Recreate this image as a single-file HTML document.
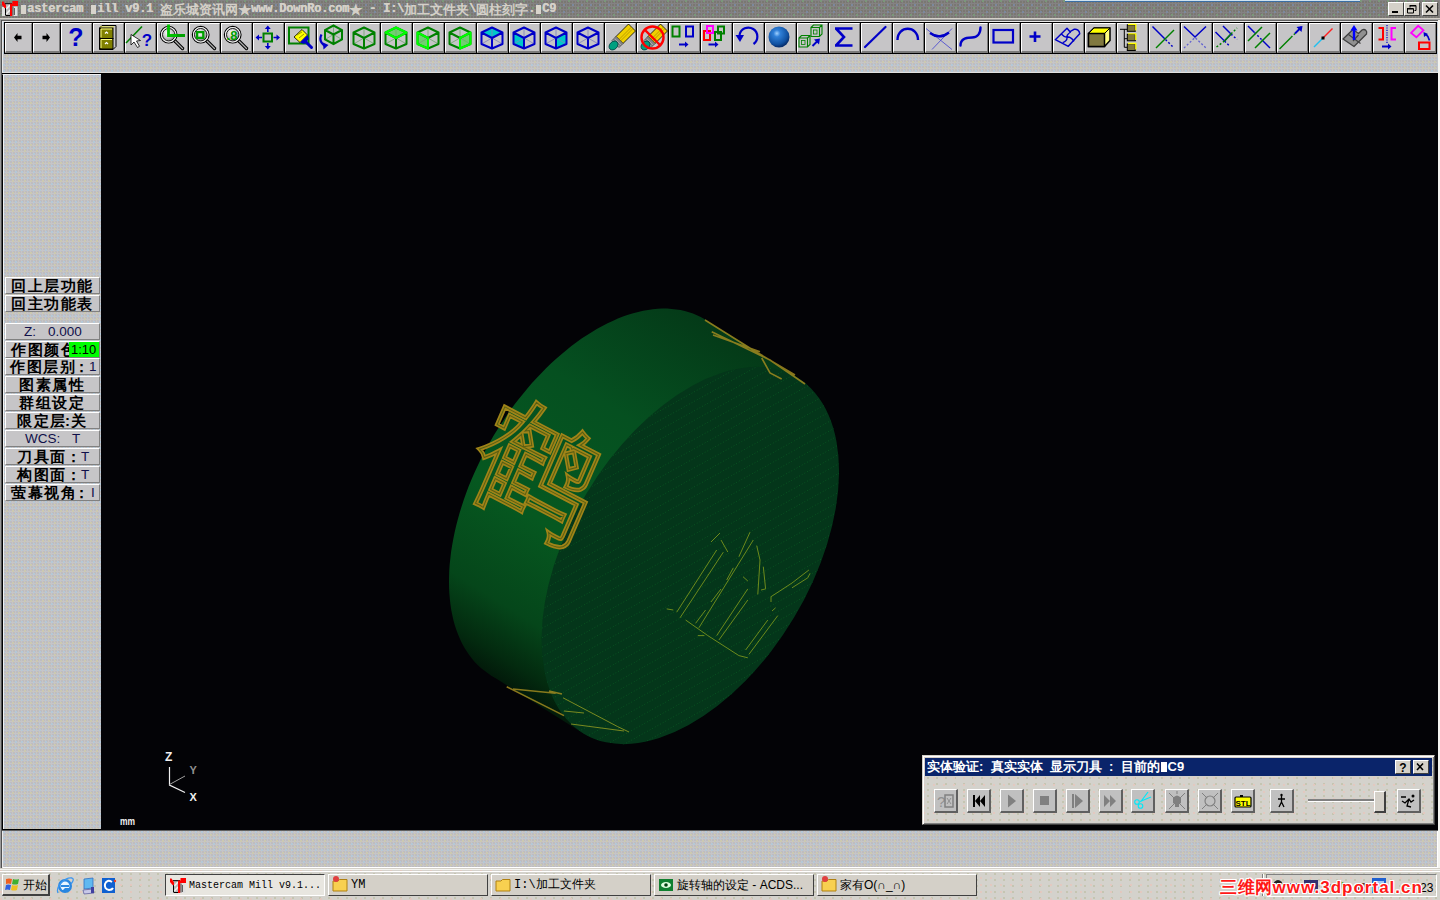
<!DOCTYPE html><html><head><meta charset="utf-8"><style>
*{margin:0;padding:0;box-sizing:border-box}
html,body{width:1440px;height:900px;overflow:hidden;background:#c6c5c7;font-family:"Liberation Sans",sans-serif;position:relative}
.a{position:absolute}
.tx{background-color:#c6c5c7;background-image:radial-gradient(circle at 1px 1px,#b4c8d8 0.8px,transparent 0.9px),radial-gradient(circle at 1px 1px,#ccc9b0 0.8px,transparent 0.9px),radial-gradient(circle at 1px 1px,#bebdbf 0.8px,transparent 0.9px);background-size:6px 6px,6px 6px,3px 3px;background-position:0 0,3px 3px,1px 2px}
.tt{background-color:#d4d2cc;background-image:radial-gradient(circle at 1px 1px,#e4c8c0 0.7px,transparent 0.8px),radial-gradient(circle at 1px 1px,#c4c4b0 0.7px,transparent 0.8px);background-size:10px 7px,9px 6px;background-position:0 0,4px 3px}
.tg{background-color:#848283;background-image:radial-gradient(circle at 1px 1px,#7a9a7a 0.7px,transparent 0.8px),radial-gradient(circle at 1px 1px,#7c8aa0 0.7px,transparent 0.8px),radial-gradient(circle at 1px 1px,#7a7872 0.8px,transparent 0.9px);background-size:9px 7px,9px 7px,3px 3px;background-position:1px 0,5px 4px,0 1px}
.btn{position:absolute;top:23px;height:30px;background:#c6c5c7;border-top:1px solid #fff;border-left:1px solid #fff;border-right:1px solid #7b7b7b;border-bottom:2px solid #7b7b7b}
.btn svg{position:absolute;left:0;top:0}
.lb{position:absolute;left:5px;width:95px;height:17px;background:#c6c5c7;border-top:1px solid #fff;border-left:1px solid #fff;border-right:1px solid #808080;border-bottom:1px solid #808080;font-weight:bold;font-size:15px;color:#000;line-height:16px;white-space:nowrap;overflow:hidden;letter-spacing:1.5px}
.db{position:absolute;top:789px;width:24px;height:24px;background:#c0c0c0;border-top:1px solid #fff;border-left:1px solid #fff;border-right:2px solid #606060;border-bottom:2px solid #606060}
.db svg{position:absolute;left:0;top:0}
.tb{position:absolute;top:874px;height:22px;background:#d4d0c8;border-top:1px solid #fff;border-left:1px solid #fff;border-right:1px solid #404040;border-bottom:1px solid #404040;font-size:12px;line-height:19px;white-space:nowrap;overflow:hidden;color:#000}
</style></head><body>

<div class="a tg" style="left:0;top:0;width:1440px;height:18px"></div>
<div class="a" style="left:1065px;top:0;width:295px;height:2px;background:#cfe3f0;border-bottom:1px solid #3a6ea5"></div>
<svg class="a" style="left:0px;top:0px" width="20" height="18" viewBox="0 0 20 18"><rect x="2" y="7" width="3.5" height="9" fill="#e0e0e0"/><path d="M2 1.5 L3.5 1.5 L6.5 6 L6.5 8.5 L5 8.5 L2 5Z" fill="#ff0000"/><rect x="5" y="8" width="1.2" height="7.5" fill="#000"/><rect x="6" y="4" width="4.5" height="11.5" fill="#b8b8b8"/><path d="M6.3 9 L10 5 M6.3 14 L10 10" stroke="#f0f0f0" stroke-width="1.6"/><rect x="5" y="3" width="7" height="1.2" fill="#202020"/><rect x="6" y="15" width="4.5" height="1" fill="#000"/><path d="M10 3.5 L12.5 3.5 L12.5 1 L18 1 L18 6 L12.5 6 L12.5 16 L10 16Z" fill="#ff0000"/><rect x="12.5" y="6.5" width="5" height="9.5" fill="#e0e0e0"/><rect x="14" y="8" width="1" height="7" fill="#606060"/><rect x="12.5" y="6.5" width="1" height="9" fill="#404040"/></svg>
<div class="a" style="left:21px;top:5px;width:5px;height:9px;background:#d8d4cc"></div><div class="a" style="left:27px;top:1px;width:7px;font-family:'Liberation Mono', monospace;font-size:12px;font-weight:bold;line-height:17px;color:#d4d0c8;text-shadow:0.5px 0 #d4d0c8">a</div><div class="a" style="left:34px;top:1px;width:7px;font-family:'Liberation Mono', monospace;font-size:12px;font-weight:bold;line-height:17px;color:#d4d0c8;text-shadow:0.5px 0 #d4d0c8">s</div><div class="a" style="left:41px;top:1px;width:7px;font-family:'Liberation Mono', monospace;font-size:12px;font-weight:bold;line-height:17px;color:#d4d0c8;text-shadow:0.5px 0 #d4d0c8">t</div><div class="a" style="left:48px;top:1px;width:7px;font-family:'Liberation Mono', monospace;font-size:12px;font-weight:bold;line-height:17px;color:#d4d0c8;text-shadow:0.5px 0 #d4d0c8">e</div><div class="a" style="left:55px;top:1px;width:7px;font-family:'Liberation Mono', monospace;font-size:12px;font-weight:bold;line-height:17px;color:#d4d0c8;text-shadow:0.5px 0 #d4d0c8">r</div><div class="a" style="left:62px;top:1px;width:7px;font-family:'Liberation Mono', monospace;font-size:12px;font-weight:bold;line-height:17px;color:#d4d0c8;text-shadow:0.5px 0 #d4d0c8">c</div><div class="a" style="left:69px;top:1px;width:7px;font-family:'Liberation Mono', monospace;font-size:12px;font-weight:bold;line-height:17px;color:#d4d0c8;text-shadow:0.5px 0 #d4d0c8">a</div><div class="a" style="left:76px;top:1px;width:7px;font-family:'Liberation Mono', monospace;font-size:12px;font-weight:bold;line-height:17px;color:#d4d0c8;text-shadow:0.5px 0 #d4d0c8">m</div><div class="a" style="left:91px;top:5px;width:5px;height:9px;background:#d8d4cc"></div><div class="a" style="left:97px;top:1px;width:7px;font-family:'Liberation Mono', monospace;font-size:12px;font-weight:bold;line-height:17px;color:#d4d0c8;text-shadow:0.5px 0 #d4d0c8">i</div><div class="a" style="left:104px;top:1px;width:7px;font-family:'Liberation Mono', monospace;font-size:12px;font-weight:bold;line-height:17px;color:#d4d0c8;text-shadow:0.5px 0 #d4d0c8">l</div><div class="a" style="left:111px;top:1px;width:7px;font-family:'Liberation Mono', monospace;font-size:12px;font-weight:bold;line-height:17px;color:#d4d0c8;text-shadow:0.5px 0 #d4d0c8">l</div><div class="a" style="left:125px;top:1px;width:7px;font-family:'Liberation Mono', monospace;font-size:12px;font-weight:bold;line-height:17px;color:#d4d0c8;text-shadow:0.5px 0 #d4d0c8">v</div><div class="a" style="left:132px;top:1px;width:7px;font-family:'Liberation Mono', monospace;font-size:12px;font-weight:bold;line-height:17px;color:#d4d0c8;text-shadow:0.5px 0 #d4d0c8">9</div><div class="a" style="left:139px;top:1px;width:7px;font-family:'Liberation Mono', monospace;font-size:12px;font-weight:bold;line-height:17px;color:#d4d0c8;text-shadow:0.5px 0 #d4d0c8">.</div><div class="a" style="left:146px;top:1px;width:7px;font-family:'Liberation Mono', monospace;font-size:12px;font-weight:bold;line-height:17px;color:#d4d0c8;text-shadow:0.5px 0 #d4d0c8">1</div><div class="a" style="left:160px;top:1px;width:13px;text-align:center;font-size:13px;line-height:17px;color:#d4d0c8;font-weight:bold">盗</div><div class="a" style="left:173px;top:1px;width:13px;text-align:center;font-size:13px;line-height:17px;color:#d4d0c8;font-weight:bold">乐</div><div class="a" style="left:186px;top:1px;width:13px;text-align:center;font-size:13px;line-height:17px;color:#d4d0c8;font-weight:bold">城</div><div class="a" style="left:199px;top:1px;width:13px;text-align:center;font-size:13px;line-height:17px;color:#d4d0c8;font-weight:bold">资</div><div class="a" style="left:212px;top:1px;width:13px;text-align:center;font-size:13px;line-height:17px;color:#d4d0c8;font-weight:bold">讯</div><div class="a" style="left:225px;top:1px;width:13px;text-align:center;font-size:13px;line-height:17px;color:#d4d0c8;font-weight:bold">网</div><div class="a" style="left:238px;top:1px;width:13px;text-align:center;font-size:15px;line-height:17px;color:#d4d0c8;font-weight:bold">★</div><div class="a" style="left:251px;top:1px;width:7px;font-family:'Liberation Mono', monospace;font-size:12px;font-weight:bold;line-height:17px;color:#d4d0c8;text-shadow:0.5px 0 #d4d0c8">w</div><div class="a" style="left:258px;top:1px;width:7px;font-family:'Liberation Mono', monospace;font-size:12px;font-weight:bold;line-height:17px;color:#d4d0c8;text-shadow:0.5px 0 #d4d0c8">w</div><div class="a" style="left:265px;top:1px;width:7px;font-family:'Liberation Mono', monospace;font-size:12px;font-weight:bold;line-height:17px;color:#d4d0c8;text-shadow:0.5px 0 #d4d0c8">w</div><div class="a" style="left:272px;top:1px;width:7px;font-family:'Liberation Mono', monospace;font-size:12px;font-weight:bold;line-height:17px;color:#d4d0c8;text-shadow:0.5px 0 #d4d0c8">.</div><div class="a" style="left:279px;top:1px;width:7px;font-family:'Liberation Mono', monospace;font-size:12px;font-weight:bold;line-height:17px;color:#d4d0c8;text-shadow:0.5px 0 #d4d0c8">D</div><div class="a" style="left:286px;top:1px;width:7px;font-family:'Liberation Mono', monospace;font-size:12px;font-weight:bold;line-height:17px;color:#d4d0c8;text-shadow:0.5px 0 #d4d0c8">o</div><div class="a" style="left:293px;top:1px;width:7px;font-family:'Liberation Mono', monospace;font-size:12px;font-weight:bold;line-height:17px;color:#d4d0c8;text-shadow:0.5px 0 #d4d0c8">w</div><div class="a" style="left:300px;top:1px;width:7px;font-family:'Liberation Mono', monospace;font-size:12px;font-weight:bold;line-height:17px;color:#d4d0c8;text-shadow:0.5px 0 #d4d0c8">n</div><div class="a" style="left:307px;top:1px;width:7px;font-family:'Liberation Mono', monospace;font-size:12px;font-weight:bold;line-height:17px;color:#d4d0c8;text-shadow:0.5px 0 #d4d0c8">R</div><div class="a" style="left:314px;top:1px;width:7px;font-family:'Liberation Mono', monospace;font-size:12px;font-weight:bold;line-height:17px;color:#d4d0c8;text-shadow:0.5px 0 #d4d0c8">o</div><div class="a" style="left:321px;top:1px;width:7px;font-family:'Liberation Mono', monospace;font-size:12px;font-weight:bold;line-height:17px;color:#d4d0c8;text-shadow:0.5px 0 #d4d0c8">.</div><div class="a" style="left:328px;top:1px;width:7px;font-family:'Liberation Mono', monospace;font-size:12px;font-weight:bold;line-height:17px;color:#d4d0c8;text-shadow:0.5px 0 #d4d0c8">c</div><div class="a" style="left:335px;top:1px;width:7px;font-family:'Liberation Mono', monospace;font-size:12px;font-weight:bold;line-height:17px;color:#d4d0c8;text-shadow:0.5px 0 #d4d0c8">o</div><div class="a" style="left:342px;top:1px;width:7px;font-family:'Liberation Mono', monospace;font-size:12px;font-weight:bold;line-height:17px;color:#d4d0c8;text-shadow:0.5px 0 #d4d0c8">m</div><div class="a" style="left:349px;top:1px;width:13px;text-align:center;font-size:15px;line-height:17px;color:#d4d0c8;font-weight:bold">★</div><div class="a" style="left:369px;top:1px;width:7px;font-family:'Liberation Mono', monospace;font-size:12px;font-weight:bold;line-height:17px;color:#d4d0c8;text-shadow:0.5px 0 #d4d0c8">-</div><div class="a" style="left:383px;top:1px;width:7px;font-family:'Liberation Mono', monospace;font-size:12px;font-weight:bold;line-height:17px;color:#d4d0c8;text-shadow:0.5px 0 #d4d0c8">I</div><div class="a" style="left:390px;top:1px;width:7px;font-family:'Liberation Mono', monospace;font-size:12px;font-weight:bold;line-height:17px;color:#d4d0c8;text-shadow:0.5px 0 #d4d0c8">:</div><div class="a" style="left:397px;top:1px;width:7px;font-family:'Liberation Mono', monospace;font-size:12px;font-weight:bold;line-height:17px;color:#d4d0c8;text-shadow:0.5px 0 #d4d0c8">\</div><div class="a" style="left:404px;top:1px;width:13px;text-align:center;font-size:13px;line-height:17px;color:#d4d0c8;font-weight:bold">加</div><div class="a" style="left:417px;top:1px;width:13px;text-align:center;font-size:13px;line-height:17px;color:#d4d0c8;font-weight:bold">工</div><div class="a" style="left:430px;top:1px;width:13px;text-align:center;font-size:13px;line-height:17px;color:#d4d0c8;font-weight:bold">文</div><div class="a" style="left:443px;top:1px;width:13px;text-align:center;font-size:13px;line-height:17px;color:#d4d0c8;font-weight:bold">件</div><div class="a" style="left:456px;top:1px;width:13px;text-align:center;font-size:13px;line-height:17px;color:#d4d0c8;font-weight:bold">夹</div><div class="a" style="left:469px;top:1px;width:7px;font-family:'Liberation Mono', monospace;font-size:12px;font-weight:bold;line-height:17px;color:#d4d0c8;text-shadow:0.5px 0 #d4d0c8">\</div><div class="a" style="left:476px;top:1px;width:13px;text-align:center;font-size:13px;line-height:17px;color:#d4d0c8;font-weight:bold">圆</div><div class="a" style="left:489px;top:1px;width:13px;text-align:center;font-size:13px;line-height:17px;color:#d4d0c8;font-weight:bold">柱</div><div class="a" style="left:502px;top:1px;width:13px;text-align:center;font-size:13px;line-height:17px;color:#d4d0c8;font-weight:bold">刻</div><div class="a" style="left:515px;top:1px;width:13px;text-align:center;font-size:13px;line-height:17px;color:#d4d0c8;font-weight:bold">字</div><div class="a" style="left:528px;top:1px;width:7px;font-family:'Liberation Mono', monospace;font-size:12px;font-weight:bold;line-height:17px;color:#d4d0c8;text-shadow:0.5px 0 #d4d0c8">.</div><div class="a" style="left:536px;top:5px;width:5px;height:9px;background:#d8d4cc"></div><div class="a" style="left:542px;top:1px;width:7px;font-family:'Liberation Mono', monospace;font-size:12px;font-weight:bold;line-height:17px;color:#d4d0c8;text-shadow:0.5px 0 #d4d0c8">C</div><div class="a" style="left:549px;top:1px;width:7px;font-family:'Liberation Mono', monospace;font-size:12px;font-weight:bold;line-height:17px;color:#d4d0c8;text-shadow:0.5px 0 #d4d0c8">9</div>
<div class="a" style="left:1388px;top:2px;width:16px;height:14px;background:#d4d0c8;border-top:1px solid #fff;border-left:1px solid #fff;border-right:1px solid #404040;border-bottom:1px solid #404040"></div>
<div class="a" style="left:1404px;top:2px;width:16px;height:14px;background:#d4d0c8;border-top:1px solid #fff;border-left:1px solid #fff;border-right:1px solid #404040;border-bottom:1px solid #404040"></div>
<div class="a" style="left:1422px;top:2px;width:16px;height:14px;background:#d4d0c8;border-top:1px solid #fff;border-left:1px solid #fff;border-right:1px solid #404040;border-bottom:1px solid #404040"></div>
<div class="a" style="left:1392px;top:11px;width:6px;height:2px;background:#000"></div>
<svg class="a" style="left:1404px;top:2px" width="16" height="14"><path d="M6 3.5h6v5h-1.5 M6 3v2.5 M3.5 6.5h6v4.5h-6z" fill="none" stroke="#000" stroke-width="1"/><rect x="6" y="3" width="6" height="1.5" fill="#000"/><rect x="3" y="6" width="6" height="1.5" fill="#000"/></svg>
<svg class="a" style="left:1422px;top:2px" width="16" height="14"><path d="M4 3.5 L11 10.5 M11 3.5 L4 10.5" stroke="#000" stroke-width="1.6"/></svg>
<div class="a" style="left:0;top:18px;width:1440px;height:1px;background:#d4d0c8"></div>
<div class="a" style="left:0;top:19px;width:1440px;height:1px;background:#a0a0a0"></div>
<div class="a" style="left:1px;top:20px;width:1438px;height:1px;background:#606060"></div>
<div class="a" style="left:2px;top:21px;width:1436px;height:1px;background:#e8e8e8"></div>
<div class="a" style="left:0;top:20px;width:1px;height:880px;background:#9a9a9a"></div>
<div class="a" style="left:1px;top:20px;width:1px;height:849px;background:#505050"></div>
<div class="a" style="left:2px;top:21px;width:1px;height:848px;background:#e8e8e8"></div>
<div class="a" style="left:1438px;top:20px;width:2px;height:849px;background:#f4f4f0"></div>
<div class="a tx" style="left:3px;top:22px;width:1435px;height:50px"></div>
<div class="a" style="left:4px;top:22px;width:1433px;height:32px;background:#000"></div>
<svg width="0" height="0" style="position:absolute"><defs>
<radialGradient id="gl" cx="40%" cy="35%" r="65%"><stop offset="0" stop-color="#ffffff"/><stop offset=".6" stop-color="#c8c8c8"/><stop offset="1" stop-color="#909090"/></radialGradient>
<radialGradient id="sph" cx="40%" cy="33%" r="65%"><stop offset="0" stop-color="#a0d0ff"/><stop offset=".25" stop-color="#3080d8"/><stop offset=".8" stop-color="#1050a0"/><stop offset="1" stop-color="#083070"/></radialGradient>
</defs></svg>
<div class="btn" style="left:5px;width:27px"><svg style="left:-1px;top:-1px" width="27" height="29" viewBox="0 0 27 29"><path d="M9 14.5 L12.5 10 L12.5 12.8 L16.5 12.8 L16.5 16.2 L12.5 16.2 L12.5 19Z" fill="#000"/></svg></div>
<div class="btn" style="left:33px;width:27px"><svg style="left:-1px;top:-1px" width="27" height="29" viewBox="0 0 27 29"><path d="M17 14.5 L13.5 10 L13.5 12.8 L9.5 12.8 L9.5 16.2 L13.5 16.2 L13.5 19Z" fill="#000"/></svg></div>
<div class="btn" style="left:61px;width:31px"><svg style="left:-1px;top:-1px" width="31" height="29" viewBox="0 0 31 29"><text x="15" y="23" font-family="Liberation Sans" font-weight="bold" font-size="25" fill="#0000c8" text-anchor="middle">?</text></svg></div>
<div class="btn" style="left:93px;width:31px"><svg style="left:-1px;top:-1px" width="31" height="29" viewBox="0 0 31 29"><path d="M6.5 5 L9 2.5 L23 2.5 L23 23.5 L20 26.5 L6.5 26.5Z" fill="#c8c8c8" stroke="#000" stroke-width="1"/><path d="M7.5 4 L21.5 4" stroke="#ffff00" stroke-width="1.4" stroke-dasharray="1 1"/><rect x="7" y="5" width="13" height="10.5" fill="#808000" stroke="#000" stroke-width="1"/><rect x="7" y="15.5" width="13" height="10.5" fill="#808000" stroke="#000" stroke-width="1"/><path d="M8 14.5 L8 6 L19 6 M8 25 L8 16.5 L19 16.5" stroke="#ffff80" stroke-width="1" fill="none"/><path d="M12 10.5 L13.5 9 L15 10.5 M12 21 L13.5 19.5 L15 21" stroke="#fff" stroke-width="1.2" fill="none"/></svg></div>
<div class="btn" style="left:125px;width:31px"><svg style="left:-1px;top:-1px" width="31" height="29" viewBox="0 0 31 29"><path d="M1 20 L17 3.5" stroke="#008000" stroke-width="1.6"/><path d="M6 11.5 L6 22 L9 19 L12.5 24.5 L14.5 23.3 L11.5 18 L15.5 17.5Z" fill="#fff" stroke="#000" stroke-width=".8"/><text x="22" y="22.5" font-family="Liberation Sans" font-weight="bold" font-size="17" fill="#0000c8" text-anchor="middle">?</text></svg></div>
<div class="btn" style="left:157px;width:31px"><svg style="left:-1px;top:-1px" width="31" height="29" viewBox="0 0 31 29"><path d="M18 18 L25.5 25.5" stroke="#000" stroke-width="3.4" stroke-linecap="round"/><path d="M18 18 L25.5 25.5" stroke="#b0b0b0" stroke-width="1.3" stroke-linecap="round"/><circle cx="11.7" cy="11.7" r="8.3" fill="none" stroke="#000" stroke-width="1.2"/><circle cx="11.7" cy="11.7" r="7.2" fill="none" stroke="#f0f0f0" stroke-width="1.1"/><circle cx="11.7" cy="11.7" r="6.2" fill="url(#gl)" stroke="#202020" stroke-width="1"/><path d="M11.5 1.5 L11.5 12.5 L28 12.5" stroke="#00c000" stroke-width="2.8" fill="none"/><path d="M20 12.5 L28 12.5" stroke="#00a000" stroke-width="2.8"/></svg></div>
<div class="btn" style="left:189px;width:31px"><svg style="left:-1px;top:-1px" width="31" height="29" viewBox="0 0 31 29"><path d="M18 18 L25.5 25.5" stroke="#000" stroke-width="3.4" stroke-linecap="round"/><path d="M18 18 L25.5 25.5" stroke="#b0b0b0" stroke-width="1.3" stroke-linecap="round"/><circle cx="11.7" cy="11.7" r="8.3" fill="none" stroke="#000" stroke-width="1.2"/><circle cx="11.7" cy="11.7" r="7.2" fill="none" stroke="#f0f0f0" stroke-width="1.1"/><circle cx="11.7" cy="11.7" r="6.2" fill="url(#gl)" stroke="#202020" stroke-width="1"/><rect x="8.1" y="9.1" width="6.2" height="5.8" fill="none" stroke="#00a000" stroke-width="2.3"/></svg></div>
<div class="btn" style="left:221px;width:31px"><svg style="left:-1px;top:-1px" width="31" height="29" viewBox="0 0 31 29"><path d="M18 18 L25.5 25.5" stroke="#000" stroke-width="3.4" stroke-linecap="round"/><path d="M18 18 L25.5 25.5" stroke="#b0b0b0" stroke-width="1.3" stroke-linecap="round"/><circle cx="11.7" cy="11.7" r="8.3" fill="none" stroke="#000" stroke-width="1.2"/><circle cx="11.7" cy="11.7" r="7.2" fill="none" stroke="#f0f0f0" stroke-width="1.1"/><circle cx="11.7" cy="11.7" r="6.2" fill="url(#gl)" stroke="#202020" stroke-width="1"/><text x="11" y="17" font-family="Liberation Sans" font-weight="bold" font-size="13" fill="#00a000" text-anchor="middle">.8</text></svg></div>
<div class="btn" style="left:253px;width:31px"><svg style="left:-1px;top:-1px" width="31" height="29" viewBox="0 0 31 29"><rect x="10.5" y="10.5" width="8.5" height="8" fill="none" stroke="#008000" stroke-width="2"/><path d="M14.8 9 V5 M14.8 20 V24 M9 14.5 H5 M20.5 14.5 H24.5" stroke="#0000c8" stroke-width="1.6"/><path d="M14.8 2.5 L11.8 6 H17.8Z M14.8 26.5 L11.8 23 H17.8Z M2.5 14.5 L6 11.5 V17.5Z M27 14.5 L23.5 11.5 V17.5Z" fill="#0000c8"/></svg></div>
<div class="btn" style="left:285px;width:31px"><svg style="left:-1px;top:-1px" width="31" height="29" viewBox="0 0 31 29"><rect x="4" y="4.5" width="19.5" height="16" fill="none" stroke="#008000" stroke-width="2"/><path d="M9 14 L17 6.5 L22.5 12 L15 19.5Z" fill="#ffff00" stroke="#000" stroke-width=".8"/><path d="M12 12 L17 9 M14 15 L19 11" stroke="#808000" stroke-width=".8"/><path d="M15 19.5 L22.5 12 L24 16 L19 21Z" fill="#0000c8"/><path d="M21 19 L26.5 24.5" stroke="#0000c8" stroke-width="3" stroke-linecap="round"/></svg></div>
<div class="btn" style="left:317px;width:31px"><svg style="left:-1px;top:-1px" width="31" height="29" viewBox="0 0 31 29"><path d="M16.5 2.5 V11.5 M8 16.5 L16.5 11.5 L25 16.5" fill="none" stroke="#80b080" stroke-width="1"/><path d="M16.5 2.5 L25 7 L25 16.5 L16.5 21 L8 16.5 L8 7Z M8 7 L16.5 11.5 L25 7 M16.5 11.5 L16.5 21" fill="none" stroke="#008000" stroke-width="2"/><path d="M4.5 11.5 Q1 18 8 23" fill="none" stroke="#0000c8" stroke-width="2.2"/><path d="M11.5 22 L6 19.5 L6.5 26.5Z" fill="#0000c8"/></svg></div>
<div class="btn" style="left:349px;width:31px"><svg style="left:-1px;top:-1px" width="31" height="29" viewBox="0 0 31 29"><path d="M15 4.5 L15 15 M15 15 L4.5 21 M15 15 L25.5 21" stroke="#70a870" stroke-width="1" opacity=".8"/><path d="M15 4.5 L25.5 9.5 L25.5 21 L15 25.5 L4.5 21 L4.5 9.5Z M4.5 9.5 L15 15 L25.5 9.5 M15 15 L15 25.5" fill="none" stroke="#008000" stroke-width="2" stroke-linejoin="round"/></svg></div>
<div class="btn" style="left:381px;width:31px"><svg style="left:-1px;top:-1px" width="31" height="29" viewBox="0 0 31 29"><path d="M15 4.5 L25.5 9.5 L15 15 L4.5 9.5Z" fill="#70d070"/><path d="M15 4.5 L15 15 M15 15 L4.5 21 M15 15 L25.5 21" stroke="#70a870" stroke-width="1" opacity=".8"/><path d="M15 4.5 L25.5 9.5 L25.5 21 L15 25.5 L4.5 21 L4.5 9.5Z M4.5 9.5 L15 15 L25.5 9.5 M15 15 L15 25.5" fill="none" stroke="#008000" stroke-width="2" stroke-linejoin="round"/><path d="M15 4.5 L25.5 9.5 L15 15 L4.5 9.5Z" fill="none" stroke="#00ff00" stroke-width="2" stroke-linejoin="round"/></svg></div>
<div class="btn" style="left:413px;width:31px"><svg style="left:-1px;top:-1px" width="31" height="29" viewBox="0 0 31 29"><path d="M4.5 9.5 L15 15 L15 25.5 L4.5 21Z" fill="#70d070"/><path d="M15 4.5 L15 15 M15 15 L4.5 21 M15 15 L25.5 21" stroke="#70a870" stroke-width="1" opacity=".8"/><path d="M15 4.5 L25.5 9.5 L25.5 21 L15 25.5 L4.5 21 L4.5 9.5Z M4.5 9.5 L15 15 L25.5 9.5 M15 15 L15 25.5" fill="none" stroke="#008000" stroke-width="2" stroke-linejoin="round"/><path d="M4.5 9.5 L15 15 L15 25.5 L4.5 21Z" fill="none" stroke="#00ff00" stroke-width="2" stroke-linejoin="round"/></svg></div>
<div class="btn" style="left:445px;width:31px"><svg style="left:-1px;top:-1px" width="31" height="29" viewBox="0 0 31 29"><path d="M25.5 9.5 L15 15 L15 25.5 L25.5 21Z" fill="#70d070"/><path d="M15 4.5 L15 15 M15 15 L4.5 21 M15 15 L25.5 21" stroke="#70a870" stroke-width="1" opacity=".8"/><path d="M15 4.5 L25.5 9.5 L25.5 21 L15 25.5 L4.5 21 L4.5 9.5Z M4.5 9.5 L15 15 L25.5 9.5 M15 15 L15 25.5" fill="none" stroke="#008000" stroke-width="2" stroke-linejoin="round"/><path d="M25.5 9.5 L15 15 L15 25.5 L25.5 21Z" fill="none" stroke="#00ff00" stroke-width="2" stroke-linejoin="round"/></svg></div>
<div class="btn" style="left:477px;width:31px"><svg style="left:-1px;top:-1px" width="31" height="29" viewBox="0 0 31 29"><path d="M15 4.5 L25.5 9.5 L15 15 L4.5 9.5Z" fill="#00c8c8"/><path d="M15 4.5 L15 15 M15 15 L4.5 21 M15 15 L25.5 21" stroke="#8080c0" stroke-width="1" opacity=".8"/><path d="M15 4.5 L25.5 9.5 L25.5 21 L15 25.5 L4.5 21 L4.5 9.5Z M4.5 9.5 L15 15 L25.5 9.5 M15 15 L15 25.5" fill="none" stroke="#0000c8" stroke-width="2" stroke-linejoin="round"/></svg></div>
<div class="btn" style="left:509px;width:31px"><svg style="left:-1px;top:-1px" width="31" height="29" viewBox="0 0 31 29"><path d="M4.5 9.5 L15 15 L15 25.5 L4.5 21Z" fill="#00c8c8"/><path d="M15 4.5 L15 15 M15 15 L4.5 21 M15 15 L25.5 21" stroke="#8080c0" stroke-width="1" opacity=".8"/><path d="M15 4.5 L25.5 9.5 L25.5 21 L15 25.5 L4.5 21 L4.5 9.5Z M4.5 9.5 L15 15 L25.5 9.5 M15 15 L15 25.5" fill="none" stroke="#0000c8" stroke-width="2" stroke-linejoin="round"/></svg></div>
<div class="btn" style="left:541px;width:31px"><svg style="left:-1px;top:-1px" width="31" height="29" viewBox="0 0 31 29"><path d="M25.5 9.5 L15 15 L15 25.5 L25.5 21Z" fill="#00c8c8"/><path d="M15 4.5 L15 15 M15 15 L4.5 21 M15 15 L25.5 21" stroke="#8080c0" stroke-width="1" opacity=".8"/><path d="M15 4.5 L25.5 9.5 L25.5 21 L15 25.5 L4.5 21 L4.5 9.5Z M4.5 9.5 L15 15 L25.5 9.5 M15 15 L15 25.5" fill="none" stroke="#0000c8" stroke-width="2" stroke-linejoin="round"/></svg></div>
<div class="btn" style="left:573px;width:31px"><svg style="left:-1px;top:-1px" width="31" height="29" viewBox="0 0 31 29"><path d="M15 4.5 L15 15 M15 15 L4.5 21 M15 15 L25.5 21" stroke="#8080c0" stroke-width="1" opacity=".8"/><path d="M15 4.5 L25.5 9.5 L25.5 21 L15 25.5 L4.5 21 L4.5 9.5Z M4.5 9.5 L15 15 L25.5 9.5 M15 15 L15 25.5" fill="none" stroke="#0000c8" stroke-width="2" stroke-linejoin="round"/></svg></div>
<div class="btn" style="left:605px;width:31px"><svg style="left:-1px;top:-1px" width="31" height="29" viewBox="0 0 31 29"><path d="M11 13.5 L23.5 1 L30.5 8 L18 20.5Z" fill="#f0d000" stroke="#000" stroke-width=".8"/><path d="M14 16.5 L26.5 4 M15.5 18 L28 5.5" stroke="#b09000" stroke-width=".8"/><path d="M7 17.5 L11 13.5 L18 20.5 L14 24.5Z" fill="#a8a8a8" stroke="#404040" stroke-width=".8"/><path d="M8.5 16 L15.5 23 M10 14.5 L17 21.5" stroke="#505050" stroke-width=".8"/><ellipse cx="8.5" cy="22.5" rx="5" ry="3.8" transform="rotate(-45 8.5 22.5)" fill="#00a080" stroke="#004040" stroke-width=".8"/></svg></div>
<div class="btn" style="left:637px;width:31px"><svg style="left:-1px;top:-1px" width="31" height="29" viewBox="0 0 31 29"><path d="M11 13.5 L23.5 1 L30.5 8 L18 20.5Z" fill="#f0d000" stroke="#000" stroke-width=".8"/><path d="M14 16.5 L26.5 4 M15.5 18 L28 5.5" stroke="#b09000" stroke-width=".8"/><path d="M7 17.5 L11 13.5 L18 20.5 L14 24.5Z" fill="#a8a8a8" stroke="#404040" stroke-width=".8"/><path d="M8.5 16 L15.5 23 M10 14.5 L17 21.5" stroke="#505050" stroke-width=".8"/><ellipse cx="8.5" cy="22.5" rx="5" ry="3.8" transform="rotate(-45 8.5 22.5)" fill="#00a080" stroke="#004040" stroke-width=".8"/><circle cx="15.5" cy="14.5" r="11" fill="none" stroke="#ff0000" stroke-width="2.4"/><path d="M8 7 L23 22" stroke="#ff0000" stroke-width="2.4"/></svg></div>
<div class="btn" style="left:669px;width:31px"><svg style="left:-1px;top:-1px" width="31" height="29" viewBox="0 0 31 29"><rect x="3.5" y="3.5" width="7" height="10" fill="none" stroke="#008000" stroke-width="2"/><rect x="17" y="3.5" width="7" height="10" fill="none" stroke="#0000c8" stroke-width="2"/><path d="M10 21.5 H17" stroke="#0000c8" stroke-width="2"/><path d="M19.5 21.5 L16 18.5 V24.5Z" fill="#0000c8"/></svg></div>
<div class="btn" style="left:701px;width:31px"><svg style="left:-1px;top:-1px" width="31" height="29" viewBox="0 0 31 29"><rect x="3" y="8" width="6" height="9" fill="none" stroke="#ff0000" stroke-width="2"/><rect x="6" y="3" width="6" height="7" fill="none" stroke="#ff00ff" stroke-width="2"/><rect x="17" y="3.5" width="6" height="7" fill="none" stroke="#008000" stroke-width="2"/><rect x="14" y="9" width="6" height="8" fill="none" stroke="#008000" stroke-width="2"/><path d="M7.5 21.5 H15" stroke="#0000c8" stroke-width="2"/><path d="M17.5 21.5 L14 18.5 V24.5Z" fill="#0000c8"/></svg></div>
<div class="btn" style="left:733px;width:31px"><svg style="left:-1px;top:-1px" width="31" height="29" viewBox="0 0 31 29"><path d="M6.5 12 A9 9 0 1 1 20.5 21" fill="none" stroke="#0000c8" stroke-width="2.2"/><path d="M2.5 12 L11 12 L7 19Z" fill="#0000c8"/></svg></div>
<div class="btn" style="left:765px;width:31px"><svg style="left:-1px;top:-1px" width="31" height="29" viewBox="0 0 31 29"><circle cx="14" cy="14" r="10.5" fill="url(#sph)"/></svg></div>
<div class="btn" style="left:797px;width:31px"><svg style="left:-1px;top:-1px" width="31" height="29" viewBox="0 0 31 29"><path d="M14 4.5 L16.5 2 L25 2 L25 11 L22.5 13.5 L14 13.5Z M14 4.5 H22.5 V13.5 M22.5 4.5 L25 2" fill="none" stroke="#008000" stroke-width="1.1"/><rect x="16.5" y="7" width="3.5" height="4" fill="none" stroke="#008000" stroke-width=".8"/><path d="M2 15 L4.5 12.5 L13 12.5 L13 21.5 L10.5 24 L2 24Z M2 15 H10.5 V24 M10.5 15 L13 12.5" fill="none" stroke="#008000" stroke-width="1.1"/><rect x="4.5" y="17.5" width="3.5" height="4" fill="none" stroke="#008000" stroke-width=".8"/><path d="M15.5 23 L21 17.5" stroke="#0000c8" stroke-width="2"/><path d="M23 15.5 L17 16.5 L22 21.5Z" fill="#0000c8"/></svg></div>
<div class="btn" style="left:829px;width:31px"><svg style="left:-1px;top:-1px" width="31" height="29" viewBox="0 0 31 29"><path d="M6 5.5 H23.5 M6 22.5 H23.5 M7 5.5 L15 14 L7 22.5" fill="none" stroke="#0000c8" stroke-width="2.6"/></svg></div>
<div class="btn" style="left:861px;width:31px"><svg style="left:-1px;top:-1px" width="31" height="29" viewBox="0 0 31 29"><path d="M4 24 L24.5 4" stroke="#0000c8" stroke-width="2.2" stroke-linecap="round"/></svg></div>
<div class="btn" style="left:893px;width:31px"><svg style="left:-1px;top:-1px" width="31" height="29" viewBox="0 0 31 29"><path d="M4.5 17 C4.5 2 25 2 25 17" fill="none" stroke="#0000c8" stroke-width="2.4"/></svg></div>
<div class="btn" style="left:925px;width:31px"><svg style="left:-1px;top:-1px" width="31" height="29" viewBox="0 0 31 29"><path d="M1 5.5 L27 26.5 M27 5.5 L7 26.5" stroke="#4040d0" stroke-width=".8"/><path d="M5 10 Q14.5 17 24 9.5" fill="none" stroke="#0000c8" stroke-width="2.4"/><path d="M7.5 11.5 Q14.5 15.5 21 11.5 Q14.5 14 7.5 11.5Z" fill="#0000c8" stroke="#0000c8" stroke-width="1.5"/></svg></div>
<div class="btn" style="left:957px;width:31px"><svg style="left:-1px;top:-1px" width="31" height="29" viewBox="0 0 31 29"><path d="M3.5 22.5 C3.5 15 11 14.5 15 14.5 C20 14.5 23.5 11 23.5 4.5" fill="none" stroke="#0000c8" stroke-width="2.4" stroke-linecap="round"/></svg></div>
<div class="btn" style="left:989px;width:31px"><svg style="left:-1px;top:-1px" width="31" height="29" viewBox="0 0 31 29"><rect x="4.5" y="7" width="19.5" height="12.5" fill="none" stroke="#0000c8" stroke-width="2.2"/></svg></div>
<div class="btn" style="left:1021px;width:31px"><svg style="left:-1px;top:-1px" width="31" height="29" viewBox="0 0 31 29"><path d="M8.5 13.5 H19.5 M14 8.5 V19" stroke="#0000c8" stroke-width="2.6"/></svg></div>
<div class="btn" style="left:1053px;width:31px"><svg style="left:-1px;top:-1px" width="31" height="29" viewBox="0 0 31 29"><path d="M2.3 16.7 L14 5.3 L17 8.7 L21 6.3 C24 5.5 26.5 8 26.7 10.7 L15.3 23.3Z" fill="none" stroke="#0000c8" stroke-width="1.5" stroke-linejoin="round"/><path d="M8.3 11 Q12 15 15 14 Q18 14 21 18.3 M17.7 9 Q13 12 14 15 Q14 18 9.7 19.7" fill="none" stroke="#0000c8" stroke-width="1.4"/></svg></div>
<div class="btn" style="left:1085px;width:31px"><svg style="left:-1px;top:-1px" width="31" height="29" viewBox="0 0 31 29"><path d="M3.5 10.5 L9 5 L25 5 L25 17.5 L19.5 23.5 L3.5 23.5Z" fill="#ffff80" stroke="#000" stroke-width="1.5"/><path d="M3.5 10.5 L9 5 L25 5 L19.5 10.5Z" fill="#ffff00" stroke="#000" stroke-width="1"/><rect x="3.5" y="10.5" width="16" height="13" fill="#807840" stroke="#000" stroke-width="1.5"/></svg></div>
<div class="btn" style="left:1117px;width:31px"><svg style="left:-1px;top:-1px" width="31" height="29" viewBox="0 0 31 29"><path d="M3 6.3 H10.5 M7.3 6.3 V24.3 M7.3 15.7 H10.5 M7.3 24.3 H10.5" stroke="#000" stroke-width="1"/><rect x="10.3" y="1.8" width="8" height="6.5" fill="#807840" stroke="#000" stroke-width="1"/><path d="M11 1.3 H18.8 V7.5" stroke="#ffff00" stroke-width="1.3" fill="none"/><rect x="10.3" y="11.3" width="8" height="6.5" fill="#807840" stroke="#000" stroke-width="1"/><path d="M11 10.8 H18.8 V17" stroke="#ffff00" stroke-width="1.3" fill="none"/><rect x="10.3" y="21" width="8" height="6.5" fill="#807840" stroke="#000" stroke-width="1"/><path d="M11 20.5 H18.8 V26.5" stroke="#ffff00" stroke-width="1.3" fill="none"/></svg></div>
<div class="btn" style="left:1149px;width:31px"><svg style="left:-1px;top:-1px" width="31" height="29" viewBox="0 0 31 29"><path d="M3.5 3.5 L16 16" stroke="#0000c8" stroke-width="1.5"/><path d="M16.5 16.5 L25 25" stroke="#0000c8" stroke-width="1.5" stroke-dasharray="2 2"/><path d="M7 25 L25 7" stroke="#008000" stroke-width="1.5"/></svg></div>
<div class="btn" style="left:1181px;width:31px"><svg style="left:-1px;top:-1px" width="31" height="29" viewBox="0 0 31 29"><path d="M3 3.5 L14 14 L25 3.5" fill="none" stroke="#0000c8" stroke-width="1.5"/><path d="M3 25 L14 14.5 L25 25" fill="none" stroke="#6060d0" stroke-width="1.3" stroke-dasharray="2 2"/></svg></div>
<div class="btn" style="left:1213px;width:31px"><svg style="left:-1px;top:-1px" width="31" height="29" viewBox="0 0 31 29"><path d="M2.5 9 L11.5 18 L18 11 M10 3 L18 11" fill="none" stroke="#0000c8" stroke-width="1.5"/><path d="M11.5 18 L17 23.5" stroke="#0000c8" stroke-width="1.5" stroke-dasharray="2 2"/><path d="M18 11 L24 16.5" stroke="#0000c8" stroke-width="1.5" stroke-dasharray="2 2"/><path d="M11.5 18 L18 11" stroke="#008000" stroke-width="1.5"/><path d="M3.5 24 L11.5 18 M18 11 L24 5" stroke="#008000" stroke-width="1.5" stroke-dasharray="2 2"/></svg></div>
<div class="btn" style="left:1245px;width:31px"><svg style="left:-1px;top:-1px" width="31" height="29" viewBox="0 0 31 29"><path d="M3 3 L9.5 9.5" stroke="#0000c8" stroke-width="1.5"/><path d="M9.5 9.5 L17 17" stroke="#0000c8" stroke-width="1.5" stroke-dasharray="2 2"/><path d="M17 17 L25 25" stroke="#0000c8" stroke-width="1.5"/><path d="M3 18 L17 4 M10 25 L25 10" stroke="#008000" stroke-width="1.5"/></svg></div>
<div class="btn" style="left:1277px;width:31px"><svg style="left:-1px;top:-1px" width="31" height="29" viewBox="0 0 31 29"><path d="M2.5 26 L14 14.5" stroke="#008000" stroke-width="1.5"/><path d="M14 14.5 L18 10.5" stroke="#008000" stroke-width="1.5" stroke-dasharray="2 2"/><path d="M18 10.5 L24.5 4" stroke="#0000c8" stroke-width="1.8"/><path d="M25.5 3 L19.5 4 L24.5 9Z" fill="#0000c8"/></svg></div>
<div class="btn" style="left:1309px;width:31px"><svg style="left:-1px;top:-1px" width="31" height="29" viewBox="0 0 31 29"><path d="M5 24 L14 15" stroke="#20c0f0" stroke-width="1.5"/><path d="M14 15 L23.5 5.5" stroke="#ff2020" stroke-width="1.5"/><rect x="12.5" y="13.5" width="3" height="3" fill="#000"/></svg></div>
<div class="btn" style="left:1341px;width:31px"><svg style="left:-1px;top:-1px" width="31" height="29" viewBox="0 0 31 29"><path d="M2 16 L12 6.5 L17.5 10.5 L21 7 C24 5.5 26.5 8 25.5 11 L13 23.5Z" fill="#909090" stroke="#404040" stroke-width="1.3" stroke-linejoin="round"/><path d="M7.5 11.5 L19.5 20.5 M12 18 L17.5 12" stroke="#404040" stroke-width="1.2"/><path d="M13 17 V6" stroke="#0000ff" stroke-width="2.4"/><path d="M13 2 L9.5 7.5 H16.5Z" fill="#0000ff"/></svg></div>
<div class="btn" style="left:1373px;width:31px"><svg style="left:-1px;top:-1px" width="31" height="29" viewBox="0 0 31 29"><path d="M5.5 5 H10 V16.5 H5.5" fill="none" stroke="#ff0000" stroke-width="2"/><path d="M23 5 H18.5 V16.5 H23" fill="none" stroke="#ff00ff" stroke-width="2"/><path d="M14 2 V21" stroke="#0000c8" stroke-width="1.2" stroke-dasharray="1.2 1.2"/><path d="M9 23.5 H16" stroke="#0000c8" stroke-width="2"/><path d="M18.5 23.5 L15 20.5 V26.5Z" fill="#0000c8"/></svg></div>
<div class="btn" style="left:1405px;width:31px"><svg style="left:-1px;top:-1px" width="31" height="29" viewBox="0 0 31 29"><path d="M6.1 9.9 L13.2 2.8 L18.5 7.2 L11.4 14.3Z" fill="none" stroke="#ff00ff" stroke-width="1.8"/><rect x="14" y="19.5" width="10.5" height="6.5" fill="none" stroke="#ff0000" stroke-width="2"/><path d="M24.5 17.5 Q23.5 13 20 10.5" fill="none" stroke="#0000c8" stroke-width="1.6"/><path d="M18.5 9 L19 14 L23 11Z" fill="#0000c8"/></svg></div>
<div class="a" style="left:3px;top:72px;width:1435px;height:1px;background:#e0e0e0"></div>
<div class="a" style="left:2px;top:73px;width:1436px;height:1px;background:#000"></div>
<div class="a tx" style="left:2px;top:74px;width:99px;height:756px;border-left:1px solid #000;border-top:1px solid #f0f0f0"></div>
<div class="a" style="left:3px;top:75px;width:1px;height:754px;background:#f0f0f0"></div>
<div class="a" style="left:2px;top:829px;width:99px;height:1px;background:#000"></div>
<div class="a" style="left:101px;top:74px;width:1337px;height:756px;background:#030306"></div>
<div class="lb" style="top:277px"><span style="position:absolute;left:5px;top:0;">回上层功能</span></div>
<div class="lb" style="top:295px"><span style="position:absolute;left:5px;top:0;">回主功能表</span></div>
<div class="lb" style="top:323px"><span style="position:absolute;left:18px;top:0;font-weight:normal;font-family:'Liberation Sans',sans-serif;color:#10104a;font-size:13.5px;letter-spacing:0;">Z:</span><span style="position:absolute;left:42px;top:0;font-weight:normal;font-family:'Liberation Sans',sans-serif;color:#10104a;font-size:13.5px;letter-spacing:0;">0.000</span></div>
<div class="lb" style="top:341px"><span style="position:absolute;left:5px;top:0;">作图颜色</span><span style="position:absolute;left:63px;top:0px;width:31px;height:15px;background:#00ff00"></span><span style="position:absolute;left:65px;top:0;font-weight:normal;font-family:'Liberation Sans',sans-serif;color:#10104a;font-size:13.5px;letter-spacing:0;color:#000;font-size:13px;">1:10</span></div>
<div class="lb" style="top:358px"><span style="position:absolute;left:4px;top:0;">作图层别</span><span style="position:absolute;left:68px;top:0;">：</span><span style="position:absolute;left:83px;top:0;font-weight:normal;font-family:'Liberation Sans',sans-serif;color:#10104a;font-size:13.5px;letter-spacing:0;">1</span></div>
<div class="lb" style="top:376px"><span style="position:absolute;left:13px;top:0;">图素属性</span></div>
<div class="lb" style="top:394px"><span style="position:absolute;left:13px;top:0;">群组设定</span></div>
<div class="lb" style="top:412px"><span style="position:absolute;left:11px;top:0;">限定层</span><span style="position:absolute;left:59px;top:0;font-size:15px;">:</span><span style="position:absolute;left:65px;top:0;">关</span></div>
<div class="lb" style="top:430px"><span style="position:absolute;left:19px;top:0;font-weight:normal;font-family:'Liberation Sans',sans-serif;color:#10104a;font-size:13.5px;letter-spacing:0;">WCS:</span><span style="position:absolute;left:66px;top:0;font-weight:normal;font-family:'Liberation Sans',sans-serif;color:#10104a;font-size:13.5px;letter-spacing:0;">T</span></div>
<div class="lb" style="top:448px"><span style="position:absolute;left:11px;top:0;">刀具面</span><span style="position:absolute;left:60px;top:0;">：</span><span style="position:absolute;left:75px;top:0;font-weight:normal;font-family:'Liberation Sans',sans-serif;color:#10104a;font-size:13.5px;letter-spacing:0;">T</span></div>
<div class="lb" style="top:466px"><span style="position:absolute;left:11px;top:0;">构图面</span><span style="position:absolute;left:60px;top:0;">：</span><span style="position:absolute;left:75px;top:0;font-weight:normal;font-family:'Liberation Sans',sans-serif;color:#10104a;font-size:13.5px;letter-spacing:0;">T</span></div>
<div class="lb" style="top:484px"><span style="position:absolute;left:5px;top:0;">萤幕视角</span><span style="position:absolute;left:68px;top:0;">：</span><span style="position:absolute;left:85px;top:0;font-weight:normal;font-family:'Liberation Sans',sans-serif;color:#10104a;font-size:13.5px;letter-spacing:0;">I</span></div>
<svg class="a" style="left:0;top:0" width="1440" height="900" viewBox="0 0 1440 900">
<defs>
<linearGradient id="sideg" gradientUnits="userSpaceOnUse" x1="798" y1="378" x2="577" y2="729">
<stop offset="0" stop-color="#043a18"/><stop offset=".3" stop-color="#055020"/><stop offset=".62" stop-color="#065820"/><stop offset=".84" stop-color="#05461a"/><stop offset=".95" stop-color="#032a0f"/><stop offset="1" stop-color="#021a0a"/></linearGradient>
<pattern id="fdots" patternUnits="userSpaceOnUse" width="6" height="11" patternTransform="rotate(-30)"><rect width="6" height="11" fill="#04361a"/><rect x="0" y="0" width="1.2" height="1.2" fill="#0a5a22"/><rect x="3" y="0" width="1.2" height="1.2" fill="#0a5a22"/></pattern>
</defs>
<path d="M704.3 319.1 L707.9 321.4 L711.3 323.8 L714.6 326.6 L717.7 329.5 L720.7 332.6 L723.6 335.9 L726.3 339.4 L728.8 343.1 L731.2 347.0 L733.4 351.1 L735.4 355.3 L737.3 359.7 L739.0 364.3 L740.6 369.1 L741.9 374.0 L743.1 379.1 L744.1 384.3 L745.0 389.6 L745.6 395.1 L746.1 400.7 L746.4 406.4 L746.5 412.2 L746.4 418.1 L746.2 424.2 L745.7 430.3 L745.1 436.5 L744.3 442.7 L743.4 449.1 L742.2 455.5 L740.9 461.9 L739.4 468.4 L737.7 474.9 L735.9 481.5 L733.9 488.1 L731.7 494.6 L729.3 501.2 L726.8 507.8 L724.2 514.4 L721.4 520.9 L718.4 527.4 L715.3 533.9 L712.1 540.3 L708.7 546.7 L705.1 553.1 L701.5 559.3 L697.7 565.5 L693.8 571.6 L689.8 577.6 L685.6 583.5 L681.4 589.3 L677.0 595.0 L672.6 600.6 L668.1 606.0 L663.5 611.3 L658.8 616.5 L654.0 621.5 L649.1 626.4 L644.2 631.1 L639.3 635.7 L634.3 640.1 L629.2 644.3 L624.1 648.3 L619.0 652.2 L613.9 655.8 L608.7 659.3 L603.5 662.6 L598.3 665.6 L593.1 668.5 L587.9 671.1 L582.8 673.6 L577.6 675.8 L572.5 677.8 L567.4 679.6 L562.3 681.2 L557.3 682.5 L552.3 683.7 L547.4 684.5 L542.5 685.2 L537.8 685.6 L533.0 685.8 L528.4 685.8 L523.9 685.6 L519.4 685.1 L515.0 684.4 L510.8 683.4 L506.6 682.3 L502.6 680.9 L498.6 679.3 L494.8 677.4 L491.1 675.4 L487.6 673.1 L484.2 670.6 L480.9 667.9 L477.7 665.0 L474.7 661.9 L471.9 658.6 L469.2 655.0 L466.7 651.3 L464.3 647.5 L462.1 643.4 L460.0 639.1 L458.2 634.7 L456.4 630.1 L454.9 625.4 L453.5 620.4 L452.4 615.4 L451.3 610.2 L450.5 604.8 L449.9 599.4 L449.4 593.8 L449.1 588.1 L449.0 582.2 L449.1 576.3 L449.3 570.3 L449.7 564.2 L450.4 558.0 L451.1 551.7 L452.1 545.4 L453.3 539.0 L454.6 532.5 L456.1 526.0 L457.8 519.5 L459.6 513.0 L461.6 506.4 L463.8 499.8 L466.1 493.2 L468.6 486.6 L471.3 480.1 L474.1 473.5 L477.1 467.0 L480.2 460.5 L483.4 454.1 L486.8 447.7 L490.3 441.4 L494.0 435.1 L497.8 429.0 L501.7 422.9 L505.7 416.9 L509.8 410.9 L514.1 405.1 L518.4 399.5 L522.9 393.9 L527.4 388.4 L532.0 383.1 L536.7 378.0 L541.5 372.9 L546.3 368.0 L551.2 363.3 L556.2 358.8 L561.2 354.4 L566.3 350.2 L571.4 346.1 L576.5 342.3 L581.6 338.6 L586.8 335.2 L592.0 331.9 L597.2 328.8 L602.4 326.0 L607.6 323.3 L612.7 320.9 L617.9 318.6 L623.0 316.6 L628.1 314.8 L633.2 313.3 L638.2 311.9 L643.2 310.8 L648.1 309.9 L652.9 309.2 L657.7 308.8 L662.4 308.6 L667.1 308.6 L671.6 308.9 L676.1 309.4 L680.5 310.1 L684.7 311.0 L688.9 312.2 L692.9 313.6 L696.9 315.2 L700.7 317.0Z" fill="url(#sideg)"/>
<path d="M582.3 732.8 L489.8 674.5 L705.7 319.9 L798.3 378.2Z" fill="url(#sideg)"/>
<clipPath id="fclip"><ellipse cx="690.3" cy="555.5" rx="207.6" ry="120.9" transform="rotate(-59.10 690.3 555.5)"/></clipPath>
<ellipse cx="690.3" cy="555.5" rx="207.6" ry="120.9" transform="rotate(-59.10 690.3 555.5)" fill="#04361a"/>

<g clip-path="url(#fclip)"><path d="M500 -80.0 L900 -301.7 M500 -70.5 L900 -292.2 M500 -61.0 L900 -282.7 M500 -51.5 L900 -273.2 M500 -42.0 L900 -263.7 M500 -32.5 L900 -254.2 M500 -23.0 L900 -244.7 M500 -13.5 L900 -235.2 M500 -4.0 L900 -225.7 M500 5.5 L900 -216.2 M500 15.0 L900 -206.7 M500 24.5 L900 -197.2 M500 34.0 L900 -187.7 M500 43.5 L900 -178.2 M500 53.0 L900 -168.7 M500 62.5 L900 -159.2 M500 72.0 L900 -149.7 M500 81.5 L900 -140.2 M500 91.0 L900 -130.7 M500 100.5 L900 -121.2 M500 110.0 L900 -111.7 M500 119.5 L900 -102.2 M500 129.0 L900 -92.7 M500 138.5 L900 -83.2 M500 148.0 L900 -73.7 M500 157.5 L900 -64.2 M500 167.0 L900 -54.7 M500 176.5 L900 -45.2 M500 186.0 L900 -35.7 M500 195.5 L900 -26.2 M500 205.0 L900 -16.7 M500 214.5 L900 -7.2 M500 224.0 L900 2.3 M500 233.5 L900 11.8 M500 243.0 L900 21.3 M500 252.5 L900 30.8 M500 262.0 L900 40.3 M500 271.5 L900 49.8 M500 281.0 L900 59.3 M500 290.5 L900 68.8 M500 300.0 L900 78.3 M500 309.5 L900 87.8 M500 319.0 L900 97.3 M500 328.5 L900 106.8 M500 338.0 L900 116.3 M500 347.5 L900 125.8 M500 357.0 L900 135.3 M500 366.5 L900 144.8 M500 376.0 L900 154.3 M500 385.5 L900 163.8 M500 395.0 L900 173.3 M500 404.5 L900 182.8 M500 414.0 L900 192.3 M500 423.5 L900 201.8 M500 433.0 L900 211.3 M500 442.5 L900 220.8 M500 452.0 L900 230.3 M500 461.5 L900 239.8 M500 471.0 L900 249.3 M500 480.5 L900 258.8 M500 490.0 L900 268.3 M500 499.5 L900 277.8 M500 509.0 L900 287.3 M500 518.5 L900 296.8 M500 528.0 L900 306.3 M500 537.5 L900 315.8 M500 547.0 L900 325.3 M500 556.5 L900 334.8 M500 566.0 L900 344.3 M500 575.5 L900 353.8 M500 585.0 L900 363.3 M500 594.5 L900 372.8 M500 604.0 L900 382.3 M500 613.5 L900 391.8 M500 623.0 L900 401.3 M500 632.5 L900 410.8 M500 642.0 L900 420.3 M500 651.5 L900 429.8 M500 661.0 L900 439.3 M500 670.5 L900 448.8 M500 680.0 L900 458.3 M500 689.5 L900 467.8 M500 699.0 L900 477.3 M500 708.5 L900 486.8 M500 718.0 L900 496.3 M500 727.5 L900 505.8 M500 737.0 L900 515.3 M500 746.5 L900 524.8 M500 756.0 L900 534.3 M500 765.5 L900 543.8 M500 775.0 L900 553.3 M500 784.5 L900 562.8 M500 794.0 L900 572.3 M500 803.5 L900 581.8 M500 813.0 L900 591.3 M500 822.5 L900 600.8 M500 832.0 L900 610.3 M500 841.5 L900 619.8 M500 851.0 L900 629.3 M500 860.5 L900 638.8" stroke="#0a5422" stroke-width="1" stroke-dasharray="1 2" fill="none"/></g>
<g transform="matrix(0.88 0.46 -0.40 0.92 482 441)"><text x="0" y="0" font-size="125" font-family="Liberation Sans" fill="none" stroke="#a08418" stroke-width="4.4" dominant-baseline="central">鹤</text><text x="0" y="0" font-size="125" font-family="Liberation Sans" fill="none" stroke="#3a5010" stroke-width="1" dominant-baseline="central" opacity=".7">鹤</text></g>
<path d="M705 320 L753 350 L795 375 M711.7 331.7 L770 360 L805 384 M713 335 L760 351.7 M761.7 358 L770 373 L781.7 379" stroke="#a08a20" stroke-width="1.6" fill="none" opacity=".85"/>
<path d="M506.7 686.7 L564 715.6 M513 689 L555.6 693.3 M549 691 L562 694" stroke="#a08a20" stroke-width="1.6" fill="none" opacity=".85"/>
<path d="M563 697.8 L617.8 726.7 L629 732 M564 711 L584 713 M571 724 L624 731" stroke="#7a8a20" stroke-width="1" fill="none"/>
<path d="M676.7 612.2 L716.7 550.0 M680.0 617.8 L723.3 552.2 M711.0 542.0 L720.0 533.0 M721.0 540.0 L727.8 552.0 M738.9 556.7 L750.0 532.2 M726.7 580.0 L733.3 567.8 M698.9 627.8 L753.3 540.0 M695.6 623.3 L705.6 610.0 M711.0 602.0 L721.0 589.0 M756.7 545.6 L760.0 560.0 L757.8 594.4 M763.3 566.7 L765.6 588.9 L761.0 590.0 M743.0 576.7 L747.8 581.0 M716.7 635.6 L747.8 588.9 M718.9 640.0 L747.8 600.0 M771.0 602.0 L771.0 596.7 L792.0 583.0 L808.9 570.0 M792.0 587.8 L807.8 577.8 L810.0 573.3 M745.6 650.0 L767.8 620.0 M748.9 654.4 L777.8 615.6 M685.6 620.0 L707.8 635.6 L738.9 655.6 L747.8 657.8 M666.7 608.9 L673.3 610.0 M697.8 635.6 L704.4 635.6 M772.0 611.0 L775.6 607.8" stroke="#6c8a1c" stroke-width="1" fill="none"/>
</svg>
<svg class="a" style="left:0;top:0" width="300" height="900" viewBox="0 0 300 900">
<path d="M169.5 767 V785 L185 792.5" stroke="#f0f0f0" stroke-width="1.2" fill="none"/>
<path d="M169.5 784.5 L185 776" stroke="#a0a0a0" stroke-width="1" fill="none"/>
<text x="165" y="761" font-family="Liberation Sans" font-weight="bold" font-size="12" fill="#f0f0f0">Z</text>
<text x="189.5" y="774" font-family="Liberation Sans" font-weight="bold" font-size="11" fill="#909090">Y</text>
<text x="189.5" y="801" font-family="Liberation Sans" font-weight="bold" font-size="11" fill="#f0f0f0">X</text>
<text x="120" y="825" font-family="Liberation Sans" font-weight="bold" font-size="11" fill="#f0f0f0" textLength="15" lengthAdjust="spacingAndGlyphs">mm</text>
</svg>
<div class="a" style="left:2px;top:830px;width:1436px;height:1px;background:#606060"></div>
<div class="a tx" style="left:3px;top:831px;width:1435px;height:37px;border-right:1px solid #fff;border-bottom:1px solid #fff"></div>
<div class="a" style="left:0;top:868px;width:1440px;height:1px;background:#d4d0c8"></div>
<div class="a tt" style="left:0;top:869px;width:1440px;height:31px;border-top:1px solid #f4f4f0"></div>
<div class="a" style="left:0;top:871px;width:1440px;height:1px;background:#fff"></div>
<div class="tb" style="left:2px;width:48px;font-size:12px;padding-left:20px;line-height:20px;border-right:2px solid #404040;border-bottom:2px solid #404040;overflow:visible">开始</div>
<svg class="a" style="left:5px;top:877px" width="16" height="16"><path d="M1 2 Q4 1 7 2 L6 7 Q3 6 1 7Z" fill="#f06020"/><path d="M8 2 Q11 3 14 2 L13 7 Q10 8 7 7Z" fill="#40b030"/><path d="M1 8 Q3 7 6 8 L5 13 Q2 12 0 13Z" fill="#3060e0"/><path d="M7 8 Q10 9 13 8 L12 13 Q9 14 6 13Z" fill="#f0c020"/></svg>
<svg class="a" style="left:55px;top:876px" width="64" height="20">
<circle cx="10" cy="10" r="7" fill="#2a86e0"/><circle cx="10" cy="10" r="4.5" fill="#e8f4ff"/><rect x="6" y="9" width="8" height="2" fill="#2a86e0"/><path d="M10 12 h5 v3 h-8z" fill="#2a86e0"/><path d="M3 17 Q1 13 6 7 Q12 1 17 2 Q20 3 16 8" fill="none" stroke="#3a96f0" stroke-width="1.3"/>
<path d="M29 3 L38 2 L38 12 L29 13Z" fill="#60b8f0" stroke="#3070c0" stroke-width=".8"/><path d="M28 14 L38 13 L39 17 L29 18Z" fill="#c8c8e8" stroke="#6060a0" stroke-width=".8"/><rect x="36" y="11" width="3" height="6" fill="#4040a0"/>
<rect x="47" y="2" width="13" height="15" fill="#1060d0"/><path d="M57 6 Q52 3 50 8 Q49 13 54 14 Q57 14 58 12" fill="none" stroke="#fff" stroke-width="2"/><circle cx="60" cy="5" r="1.2" fill="#f04020"/>
</svg>
<div class="tb" style="left:165px;width:160px;background:#e8e6e0;border-top:1px solid #404040;border-left:1px solid #404040;border-right:1px solid #fff;border-bottom:1px solid #fff;padding-left:23px;font-family:'Liberation Mono', monospace;font-size:10px;line-height:21px">Mastercam Mill v9.1...</div>
<svg class="a" style="left:168px;top:877px" width="20" height="18" viewBox="0 0 20 18"><rect x="2" y="7" width="3.5" height="9" fill="#e0e0e0"/><path d="M2 1.5 L3.5 1.5 L6.5 6 L6.5 8.5 L5 8.5 L2 5Z" fill="#ff0000"/><rect x="5" y="8" width="1.2" height="7.5" fill="#000"/><rect x="6" y="4" width="4.5" height="11.5" fill="#b8b8b8"/><path d="M6.3 9 L10 5 M6.3 14 L10 10" stroke="#f0f0f0" stroke-width="1.6"/><rect x="5" y="3" width="7" height="1.2" fill="#202020"/><rect x="6" y="15" width="4.5" height="1" fill="#000"/><path d="M10 3.5 L12.5 3.5 L12.5 1 L18 1 L18 6 L12.5 6 L12.5 16 L10 16Z" fill="#ff0000"/><rect x="12.5" y="6.5" width="5" height="9.5" fill="#e0e0e0"/><rect x="14" y="8" width="1" height="7" fill="#606060"/><rect x="12.5" y="6.5" width="1" height="9" fill="#404040"/></svg>
<div class="tb" style="left:328px;width:160px;padding-left:22px;font-family:'Liberation Mono', monospace;font-size:12px;line-height:21px">YM</div>
<svg class="a" style="left:332px;top:877px" width="16" height="16"><path d="M1 4 H6 L7.5 2.5 H15 V14 H1Z" fill="#f8d050" stroke="#b08010" stroke-width="1"/></svg>
<svg class="a" style="left:332px;top:875px" width="8" height="8"><circle cx="4" cy="4" r="3" fill="#e04040"/></svg>
<div class="tb" style="left:491px;width:160px;padding-left:22px;font-family:'Liberation Mono', monospace;font-size:12px;line-height:21px">I:\加工文件夹</div>
<svg class="a" style="left:495px;top:877px" width="16" height="16"><path d="M1 4 H6 L7.5 2.5 H15 V14 H1Z" fill="#f8d050" stroke="#b08010" stroke-width="1"/></svg>
<div class="tb" style="left:654px;width:160px;padding-left:22px;font-family:'Liberation Sans', sans-serif;font-size:12px;line-height:21px">旋转轴的设定 - ACDS...</div>
<svg class="a" style="left:658px;top:877px" width="16" height="16"><rect x="1" y="2" width="14" height="12" fill="#108030"/><ellipse cx="8" cy="8" rx="5" ry="3" fill="#e0ffe0"/><circle cx="8" cy="8" r="1.8" fill="#004010"/></svg>
<div class="tb" style="left:817px;width:160px;padding-left:22px;font-family:'Liberation Sans', sans-serif;font-size:12px;line-height:21px">家有O(∩_∩)</div>
<svg class="a" style="left:821px;top:877px" width="16" height="16"><path d="M1 4 H6 L7.5 2.5 H15 V14 H1Z" fill="#f8d050" stroke="#b08010" stroke-width="1"/></svg>
<svg class="a" style="left:821px;top:875px" width="8" height="8"><circle cx="4" cy="4" r="3" fill="#e04040"/></svg>
<div class="a" style="left:1262px;top:874px;width:2px;height:22px;border-left:1px solid #808080;border-right:1px solid #fff"></div>
<div class="a" style="left:1266px;top:874px;width:171px;height:23px;border-top:1px solid #808080;border-left:1px solid #808080;border-right:1px solid #fff;border-bottom:1px solid #fff"></div>
<svg class="a" style="left:1270px;top:877px" width="170" height="20">
<ellipse cx="8" cy="9" rx="5" ry="6" fill="#202020"/><ellipse cx="8" cy="11" rx="3" ry="4" fill="#fff"/>
<rect x="18" y="6" width="12" height="8" fill="#404080"/><rect x="34" y="3" width="14" height="12" fill="#303070"/>
<circle cx="60" cy="11" r="4" fill="#808080"/><path d="M70 4 L78 8 L72 14Z" fill="#20a040"/>
<rect x="86" y="6" width="10" height="10" fill="#603020"/><rect x="102" y="1" width="14" height="15" fill="#2060d0"/><rect x="104" y="4" width="10" height="9" fill="#a0c8f0"/>
<text x="150" y="15" font-family="Liberation Sans" font-size="12" fill="#000">23</text></svg>
<div class="a" style="left:1220px;top:878px;font-family:&quot;Liberation Sans&quot;,sans-serif;font-weight:bold;font-size:17px;line-height:19px;color:#ff1818;-webkit-text-stroke:0;text-shadow:1px 0 #fff,-1px 0 #fff,0 1px #fff,0 -1px #fff,1px 1px #fff,-1px -1px #fff,1px -1px #fff,-1px 1px #fff;white-space:nowrap"><span style="letter-spacing:0.5px">三维网</span><span style="letter-spacing:1px">www.3dportal.cn</span></div>
<div class="a tt" style="left:922px;top:755px;width:513px;height:70px;border-top:1px solid #d4d0c8;border-left:1px solid #d4d0c8;border-right:1px solid #404040;border-bottom:1px solid #404040;box-shadow:inset 1px 1px #fff,inset -1px -1px #808080"></div>
<div class="a" style="left:925px;top:758px;width:507px;height:18px;background:#0a246a"></div>
<div class='a' style='left:927px;top:758px;height:18px;line-height:18px;font-size:13px;font-weight:bold;color:#fff;white-space:nowrap'>实体验证:&nbsp; 真实实体&nbsp; 显示刀具&nbsp; :&nbsp; 目前的<span style="display:inline-block;width:6px;height:10px;background:#fff;margin:0 1px 0 1px;vertical-align:-1px"></span>C9</div>
<div class="a" style="left:1395px;top:760px;width:16px;height:14px;background:#d4d0c8;border-top:1px solid #fff;border-left:1px solid #fff;border-right:1px solid #404040;border-bottom:1px solid #404040"></div>
<div class="a" style="left:1413px;top:760px;width:16px;height:14px;background:#d4d0c8;border-top:1px solid #fff;border-left:1px solid #fff;border-right:1px solid #404040;border-bottom:1px solid #404040"></div>
<svg class="a" style="left:1395px;top:760px" width="34" height="14"><text x="8" y="11.5" font-family="Liberation Sans" font-weight="bold" font-size="12" fill="#000" text-anchor="middle">?</text><path d="M22 3.5 L28 10 M28 3.5 L22 10" stroke="#000" stroke-width="1.6"/></svg>
<div class="db" style="left:934px"><svg style="left:-1px;top:-1px" width="24" height="24"><text x="3" y="18" font-family="Liberation Sans" font-size="15" fill="#909090">?</text><rect x="11" y="6" width="8" height="12" fill="none" stroke="#808080" stroke-width="1.5"/><path d="M13 9 L17 15 M17 9 L13 15" stroke="#909090"/></svg></div>
<div class="db" style="left:967px"><svg style="left:-1px;top:-1px" width="24" height="24"><rect x="6" y="6" width="2" height="12" fill="#000"/><path d="M8 12 L13 6 V18Z M13 12 L18 6 V18Z" fill="#000"/></svg></div>
<div class="db" style="left:1000px"><svg style="left:-1px;top:-1px" width="24" height="24"><path d="M8 5.5 L16 12 L8 18.5Z" fill="#808080"/></svg></div>
<div class="db" style="left:1033px"><svg style="left:-1px;top:-1px" width="24" height="24"><rect x="7" y="7" width="9" height="9" fill="#808080"/></svg></div>
<div class="db" style="left:1066px"><svg style="left:-1px;top:-1px" width="24" height="24"><rect x="6" y="5" width="2" height="14" fill="#808080"/><path d="M9 5 L17 12 L9 19Z" fill="#808080"/></svg></div>
<div class="db" style="left:1099px"><svg style="left:-1px;top:-1px" width="24" height="24"><path d="M5 6 L11 12 L5 18Z M11 6 L17 12 L11 18Z" fill="#808080"/></svg></div>
<div class="db" style="left:1131px"><svg style="left:-1px;top:-1px" width="24" height="24"><path d="M17 3 L9.5 13 M20 8 L9 12.5" stroke="#00e8f8" stroke-width="1.2" fill="none"/><circle cx="6" cy="13" r="2.3" fill="none" stroke="#00e8f8" stroke-width="1.1"/><circle cx="9.5" cy="17" r="2.3" fill="none" stroke="#00e8f8" stroke-width="1.1"/></svg></div>
<div class="db" style="left:1165px"><svg style="left:-1px;top:-1px" width="24" height="24"><path d="M4 4 L20 20 M20 4 L4 20 M12 2 V5" stroke="#808080" stroke-width="1"/><path d="M8 9 Q12 4 16 9 L16 14 Q12 17 8 14Z" fill="#808080"/><rect x="10" y="15" width="4" height="3" fill="#808080"/></svg></div>
<div class="db" style="left:1198px"><svg style="left:-1px;top:-1px" width="24" height="24"><path d="M4 4 L20 20 M20 4 L4 20" stroke="#808080" stroke-width="1"/><circle cx="12" cy="12" r="5" fill="#c0c0c0" stroke="#808080" stroke-width="1.2"/></svg></div>
<div class="db" style="left:1231px"><svg style="left:-1px;top:-1px" width="24" height="24"><rect x="4" y="8" width="16" height="10" rx="1" fill="#ffff00" stroke="#000" stroke-width="1.2"/><text x="12" y="16.5" font-family="Liberation Sans" font-weight="bold" font-size="8" fill="#000" text-anchor="middle">STL</text><rect x="9" y="6" width="3" height="2" fill="#000"/></svg></div>
<div class="db" style="left:1270px"><svg style="left:-1px;top:-1px" width="24" height="24"><path d="M11.5 7 V13 L9 18 M11.5 13 L14 18 M8 10 H15" stroke="#000" stroke-width="1.3" fill="none"/><circle cx="11.5" cy="6" r="1.2" fill="#000"/></svg></div>
<div class="db" style="left:1397px"><svg style="left:-1px;top:-1px" width="24" height="24"><path d="M4 8 H9 M5 12 L8 14 L12 10 L14 13 L17 11 M12 10 L10 17 L14 18" stroke="#000" stroke-width="1.3" fill="none"/><circle cx="16" cy="7" r="1.5" fill="#000"/></svg></div>
<div class="a" style="left:1308px;top:799px;width:70px;height:3px;background:#808080;border-bottom:1px solid #fff"></div>
<div class="a" style="left:1374px;top:791px;width:12px;height:22px;background:#d4d0c8;border-top:1px solid #fff;border-left:1px solid #fff;border-right:2px solid #404040;border-bottom:2px solid #404040"></div>
</body></html>
